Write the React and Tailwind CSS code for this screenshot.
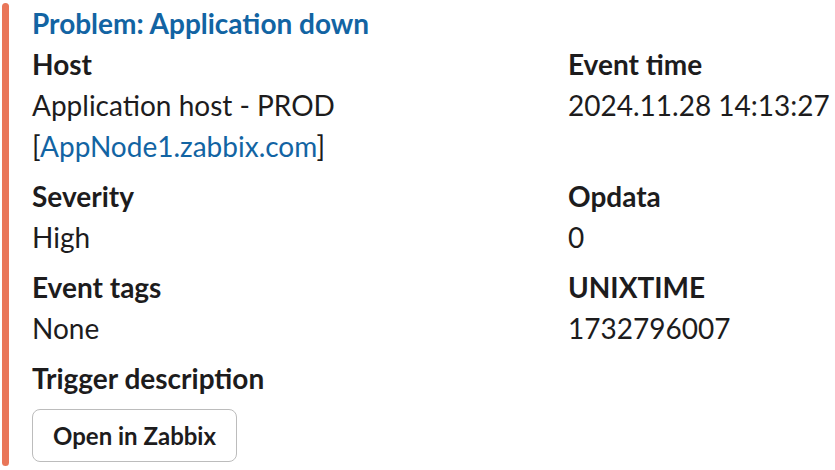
import React from 'react';

const fields = [
  { label: 'Host', value: 'host' },
  { label: 'Event time', value: '2024.11.28 14:13:27' },
  { label: 'Severity', value: 'High' },
  { label: 'Opdata', value: '0' },
  { label: 'Event tags', value: 'None' },
  { label: 'UNIXTIME', value: '1732796007' },
];

const Field = ({ label, children }) => (
  <div className="mb-[9px]">
    <div className="font-bold">{label}</div>
    <div>{children}</div>
  </div>
);

const App = () => {
  return (
    <div
      className="w-[835px] h-[470px] bg-white text-[#1d1c1d] text-[28px] leading-[41px] overflow-hidden"
      style={{ fontFamily: 'Lato, "Liberation Sans", sans-serif' }}
    >
      <div className="flex pt-[3px] pl-[2px]">
        <div className="w-[7px] h-[463px] rounded-full bg-[#e97659] shrink-0" />
        <div className="pl-[23px] flex-1">
          <div className="font-bold text-[#1264a3]">Problem: Application down</div>
          <div className="grid grid-cols-[536px_1fr]">
            {fields.map(f => (
              <Field key={f.label} label={f.label}>
                {f.value === 'host' ? (
                  <>
                    Application host - PROD
                    <br />
                    [<span className="text-[#1264a3]">AppNode1.zabbix.com</span>]
                  </>
                ) : (
                  f.value
                )}
              </Field>
            ))}
          </div>
          <div className="font-bold">Trigger description</div>
          <div className="mt-[10px]">
            <button className="h-[53px] px-[20px] border border-[#bcbcbc] rounded-[8px] bg-white font-bold text-[24px] text-[#1d1c1d]">
              Open in Zabbix
            </button>
          </div>
        </div>
      </div>
    </div>
  );
};

export default App;
